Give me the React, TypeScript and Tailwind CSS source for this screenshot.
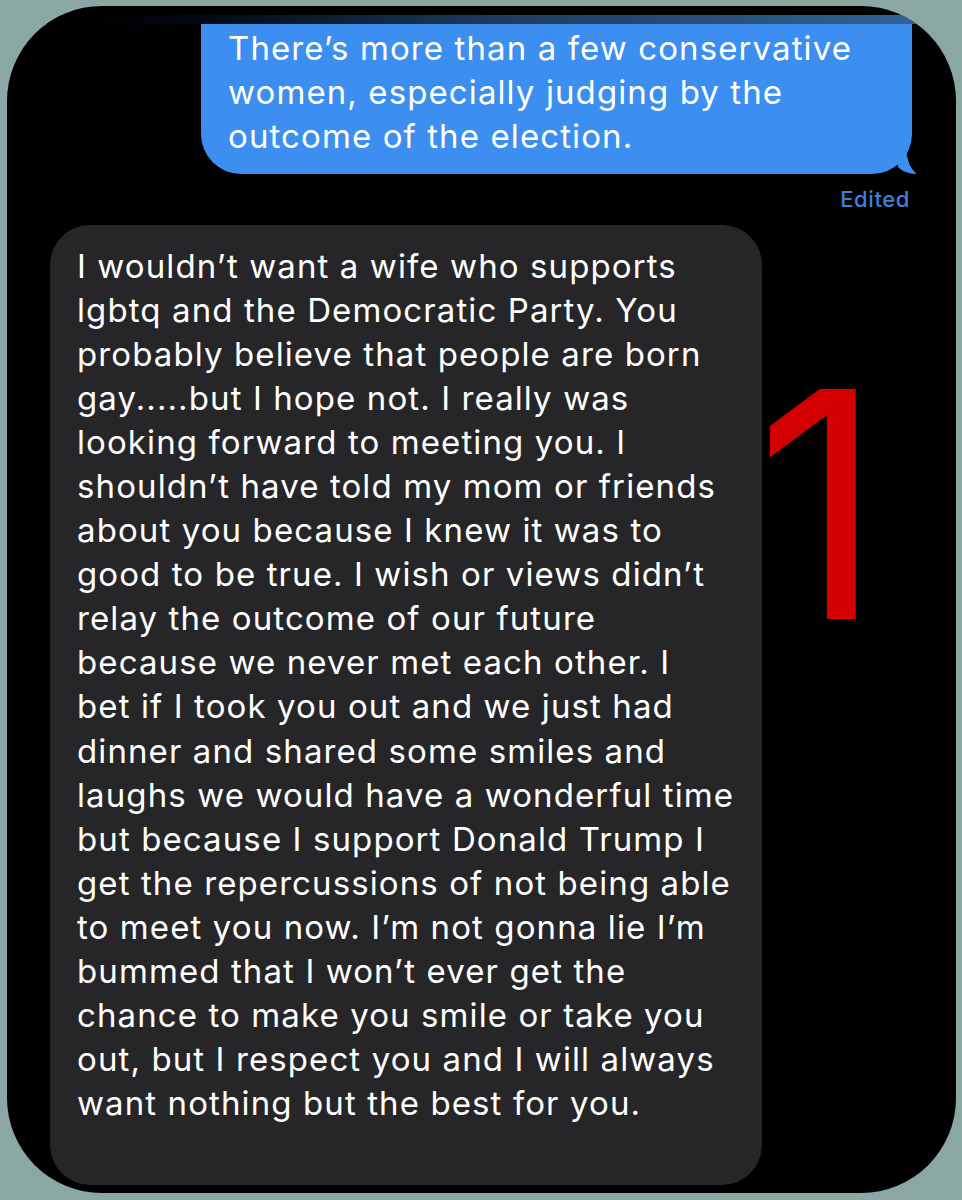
import React from 'react';

const reply = [
  'I wouldn’t want a wife who supports',
  'lgbtq and the Democratic Party. You',
  'probably believe that people are born',
  'gay.....but I hope not. I really was',
  'looking forward to meeting you. I',
  'shouldn’t have told my mom or friends',
  'about you because I knew it was to',
  'good to be true. I wish or views didn’t',
  'relay the outcome of our future',
  'because we never met each other. I',
  'bet if I took you out and we just had',
  'dinner and shared some smiles and',
  'laughs we would have a wonderful time',
  'but because I support Donald Trump I',
  'get the repercussions of not being able',
  'to meet you now. I’m not gonna lie I’m',
  'bummed that I won’t ever get the',
  'chance to make you smile or take you',
  'out, but I respect you and I will always',
  'want nothing but the best for you.',
];

const sent = [
  'There’s more than a few conservative',
  'women, especially judging by the',
  'outcome of the election.',
];

const font = { fontFamily: 'Inter, "Noto Sans", sans-serif' };

export default function App() {
  return (
    <div className="w-[962px] h-[1200px] bg-[#8ba7a4] pt-[6px] pl-[7px] pr-[6px] pb-[7px]" style={font}>
      <div className="relative h-full rounded-[95px] bg-black overflow-hidden flex flex-col">
        <div className="h-[9px] mt-[9px] bg-gradient-to-r from-black via-[#1d3a5c] to-[#36669a]" />

        {/* sent bubble */}
        <div className="relative ml-[194px] w-[711px] h-[150px] bg-[#3c8ef1] rounded-bl-[40px] rounded-br-[40px] pl-[27px] pt-[2px]">
          {sent.map((l, i) => (
            <div key={i} className="text-white text-[33px] leading-[44px] tracking-[1.1px] whitespace-nowrap">{l}</div>
          ))}
          <svg className="absolute right-[-12px] bottom-0" width="30" height="30" viewBox="0 0 30 30">
            <path d="M0 0 H12 C12 18 18 26 23 30 C14 30 8 27 4 23 Z" fill="#3c8ef1" />
          </svg>
        </div>

        <div className="self-end mr-[46px] mt-[12px] text-[#3f80d8] text-[22px] leading-[26px] font-medium tracking-[0.6px]">Edited</div>

        {/* received bubble */}
        <div className="ml-[43px] mt-[13px] w-[712px] h-[960px] bg-[#262628] rounded-[40px] pl-[27px] pt-[19px]">
          {reply.map((l, i) => (
            <div key={i} className="text-white text-[33px] leading-[44.05px] tracking-[1.1px] whitespace-nowrap">{l}</div>
          ))}
        </div>

        <div className="absolute left-[748px] top-[340px] text-[#d40000] text-[316px] leading-none">1</div>
      </div>
    </div>
  );
}
